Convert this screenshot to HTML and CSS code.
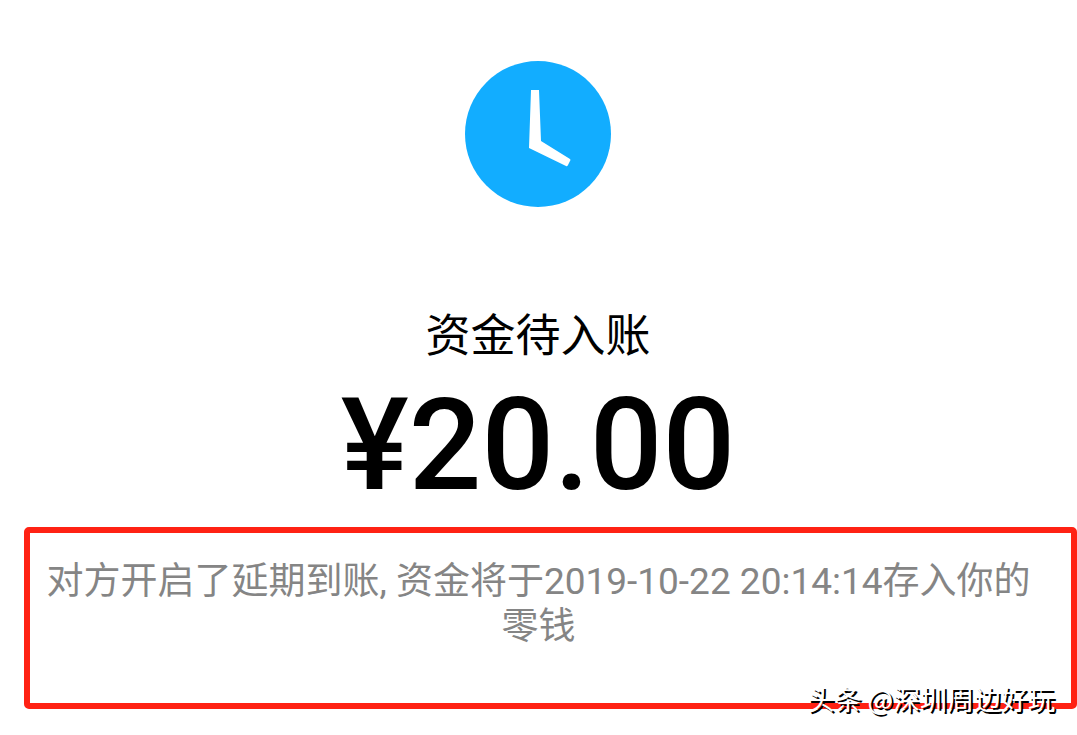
FILE: index.html
```html
<!DOCTYPE html>
<html lang="zh-CN">
<head>
  <meta charset="UTF-8" />
  <meta name="viewport" content="width=device-width, initial-scale=1.0"/>
  <title>资金待入账</title>
  <link rel="stylesheet" href="styles.css">
</head>
<body>

  <main>
    <svg class="clock" viewBox="0 0 146 146" aria-hidden="true">
      <circle cx="73" cy="73" r="73" fill="#12adff"/>
      <path d="M66 29H74L76 80L105 98Q106 99 105 100L103 104Q102 106 101 105L64 87Z" fill="#fff"/>
    </svg>

    <h1 class="status">资金待入账</h1>
    <p class="amount">¥20.00</p>

    <div class="notice">
      <p>对方开启了延期到账, 资金将于2019-10-22 20:14:14存入你的零钱</p>
      <span class="watermark">头条 @深圳周边好玩</span>
    </div>
  </main>

</body>
</html>
```
FILE: styles.css
```css
* { box-sizing: border-box; }

body {
  margin: 0;
  font-family: Roboto, 'Noto Sans CJK SC', sans-serif;
  background: #fff;
  color: #000;
}

main {
  display: flex;
  flex-direction: column;
  align-items: center;
  padding: 61px 0 26px 24px;
}

.clock,
.status,
.amount {
  margin: 0 25px 0 0;
}

.clock {
  width: 146px;
  height: 146px;
}

.status {
  margin-top: 100px;
  font-size: 45px;
  font-weight: 400;
  line-height: 60px;
}

.amount {
  margin-top: 14px;
  font-size: 128px;
  font-weight: 500;
  line-height: 128px;
}

.notice {
  position: relative;
  width: 100%;
  margin-top: 18px;
  padding: 26px 38px 54px 14px;
  border: 6px solid #ff2214;
  border-radius: 5px;
  color: #858585;
  text-align: center;
}

.notice p {
  margin: 0;
  font-size: 37px;
  line-height: 45px;
}

/* sits over the bottom border */
.watermark {
  position: absolute;
  right: 16px;
  bottom: -12px;
  color: #fff;
  font-family: 'Noto Sans CJK SC', sans-serif;
  font-size: 27px;
  line-height: 32px;
  white-space: nowrap;
  text-shadow: 2px 2px 0 #000;
}
```
